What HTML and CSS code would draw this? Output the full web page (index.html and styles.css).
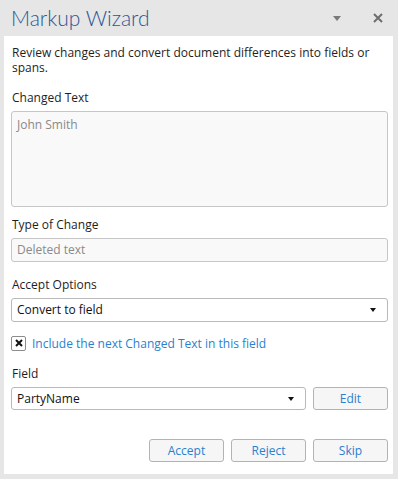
FILE: index.html
```html
<!DOCTYPE html>
<html lang="en">
<head>
<meta charset="UTF-8">
<meta name="viewport" content="width=device-width, initial-scale=1.0">
<link rel="stylesheet" href="styles.css">
<title>Markup Wizard</title>
</head>
<body>
<div class="pane">
  <div class="pane-header">
    <h1>Markup Wizard</h1>
    <div class="header-tools">
      <span class="menu-arrow"></span>
      <svg class="close-icon" width="10" height="10" viewBox="0 0 10 10">
        <path d="M1 1 L9 9 M9 1 L1 9" stroke="#6e6e6e" stroke-width="2" fill="none"/>
      </svg>
    </div>
  </div>

  <div class="pane-body">
    <p class="intro">Review changes and convert document differences into fields or spans.</p>

    <div class="label changed-label">Changed Text</div>
    <div class="box readonly big">John Smith</div>

    <div class="label type-label">Type of Change</div>
    <div class="box readonly">Deleted text</div>

    <div class="label accept-label">Accept Options</div>
    <div class="box dropdown">
      <span>Convert to field</span>
      <span class="arrow"></span>
    </div>

    <label class="check-row">
      <span class="checkbox">
        <svg width="8" height="8" viewBox="0 0 8 8">
          <path d="M1 1 L7 7 M7 1 L1 7" stroke="#111" stroke-width="2" fill="none"/>
        </svg>
      </span>
      <span class="check-text">Include the next Changed Text in this field</span>
    </label>

    <div class="label field-label">Field</div>
    <div class="field-row">
      <div class="box dropdown">
        <span>PartyName</span>
        <span class="arrow"></span>
      </div>
      <button class="btn">Edit</button>
    </div>

    <div class="actions">
      <button class="btn">Accept</button>
      <button class="btn">Reject</button>
      <button class="btn">Skip</button>
    </div>
  </div>
</div>
</body>
</html>
```

FILE: styles.css
```css
body {
  margin: 0;
  background-color: #e6e6e6;
  font-family: "Open Sans", Arial, sans-serif;
  font-size: 12px;
  color: #1e1e1e;
}

.pane {
  width: 398px;
  height: 479px;
  display: flex;
  flex-direction: column;
}

.pane-header {
  height: 36px;
  display: flex;
  align-items: center;
  justify-content: space-between;
  padding: 0 15px 0 11px;
}

.pane-header h1 {
  margin: 0;
  font-family: Lato, "Open Sans", sans-serif;
  font-weight: 300;
  font-size: 21px;
  color: #2b5797;
  line-height: 36px;
}

.header-tools {
  display: flex;
  align-items: center;
  gap: 32px;
}

.menu-arrow {
  width: 0;
  height: 0;
  border-left: 4.5px solid transparent;
  border-right: 4.5px solid transparent;
  border-top: 5px solid #7a7a7a;
}

.close-icon {
  display: block;
}

.pane-body {
  background: #fff;
  margin: 0 5px 5px 4px;
  padding: 9px 5px 0 7px;
  flex: 1;
}

.intro {
  margin: 0 0 0 1px;
  line-height: 15px;
}

.label {
  margin: 0 0 5px 1px;
  line-height: 16px;
}

.changed-label {
  margin-top: 15px;
}

.type-label {
  margin-top: 10px;
}

.accept-label {
  margin-top: 15px;
}

.field-label {
  margin-top: 16px;
}

.box {
  box-sizing: border-box;
  height: 24px;
  border: 1px solid #c6c6c6;
  border-radius: 3px;
  padding: 0 6px 0 5px;
  line-height: 22px;
}

.readonly {
  background: #f9f9f9;
  color: #8a8a8a;
}

.big {
  height: 96px;
  padding-top: 2px;
}

.dropdown {
  display: flex;
  align-items: center;
  justify-content: space-between;
  background: #fff;
  border-color: #b9b9b9;
  color: #111;
}

.arrow {
  width: 0;
  height: 0;
  border-left: 3.5px solid transparent;
  border-right: 3.5px solid transparent;
  border-top: 4px solid #111;
  margin-right: 5px;
}

.check-row {
  display: flex;
  align-items: center;
  gap: 6px;
  margin-top: 14px;
  height: 14px;
}

.checkbox {
  box-sizing: border-box;
  width: 15px;
  height: 15px;
  border: 1px solid #8c8c8c;
  border-radius: 2px;
  display: flex;
  align-items: center;
  justify-content: center;
}

.check-text {
  color: #2a7fd0;
}

.field-row {
  display: flex;
  gap: 7px;
}

.field-row .dropdown {
  flex: 1;
  height: 23px;
  line-height: 21px;
}

.btn {
  box-sizing: border-box;
  width: 75px;
  height: 23px;
  border: 1px solid #b3b3b3;
  border-radius: 3px;
  background: #f6f6f6;
  color: #2a7fd0;
  font-family: inherit;
  font-size: 12px;
  padding: 0;
}

.actions {
  display: flex;
  justify-content: flex-end;
  gap: 7px;
  margin-top: 29px;
}
```
